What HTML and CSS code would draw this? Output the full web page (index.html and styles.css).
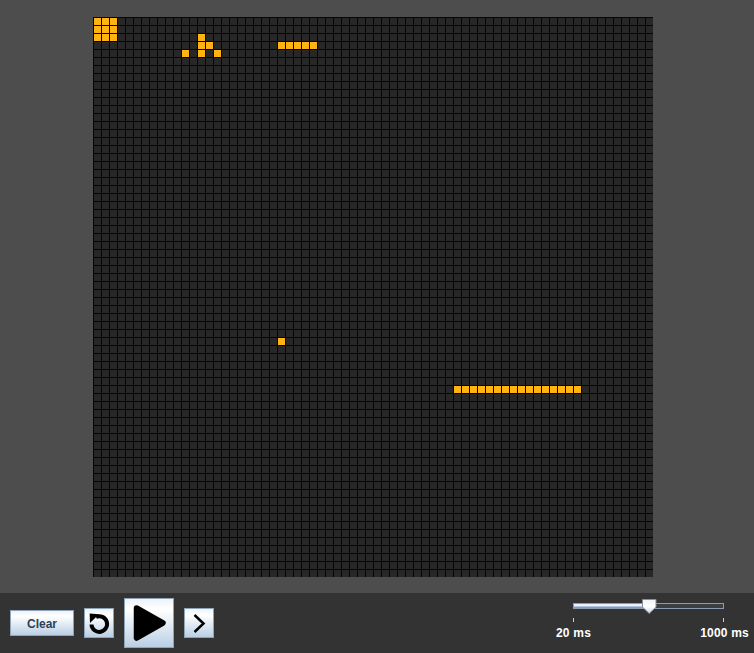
FILE: index.html
```html
<!DOCTYPE html>
<html lang="en">
<head>
<meta charset="utf-8">
<title>Game of Life</title>
<link rel="stylesheet" href="styles.css">
</head>
<body>
<main class="stage">
  <div class="board">
    <i class="cell" style="grid-area:1/1"></i><i class="cell" style="grid-area:1/2"></i><i class="cell" style="grid-area:1/3"></i>
    <i class="cell" style="grid-area:2/1"></i><i class="cell" style="grid-area:2/2"></i><i class="cell" style="grid-area:2/3"></i>
    <i class="cell" style="grid-area:3/1"></i><i class="cell" style="grid-area:3/2"></i><i class="cell" style="grid-area:3/3"></i>
    <i class="cell" style="grid-area:3/14"></i>
    <i class="cell" style="grid-area:4/14"></i><i class="cell" style="grid-area:4/15"></i>
    <i class="cell" style="grid-area:5/12"></i><i class="cell" style="grid-area:5/14"></i><i class="cell" style="grid-area:5/16"></i>
    <i class="cell" style="grid-area:4/24"></i><i class="cell" style="grid-area:4/25"></i><i class="cell" style="grid-area:4/26"></i><i class="cell" style="grid-area:4/27"></i><i class="cell" style="grid-area:4/28"></i>
    <i class="cell" style="grid-area:41/24"></i>
    <i class="cell" style="grid-area:47/46"></i><i class="cell" style="grid-area:47/47"></i><i class="cell" style="grid-area:47/48"></i><i class="cell" style="grid-area:47/49"></i>
    <i class="cell" style="grid-area:47/50"></i><i class="cell" style="grid-area:47/51"></i><i class="cell" style="grid-area:47/52"></i><i class="cell" style="grid-area:47/53"></i>
    <i class="cell" style="grid-area:47/54"></i><i class="cell" style="grid-area:47/55"></i><i class="cell" style="grid-area:47/56"></i><i class="cell" style="grid-area:47/57"></i>
    <i class="cell" style="grid-area:47/58"></i><i class="cell" style="grid-area:47/59"></i><i class="cell" style="grid-area:47/60"></i><i class="cell" style="grid-area:47/61"></i>
  </div>
</main>
<footer class="controls">
  <button class="btn btn-text" type="button">Clear</button>
  <button class="btn btn-icon" type="button" aria-label="Reset">
    <svg width="24" height="24" viewBox="0 0 24 24" class="glyph"><path d="M4.5 13.5 A7.8 7.8 0 1 0 9 6" fill="none" stroke="#000" stroke-width="4"/><path d="M2.6 2.6 L12 3.2 L3 12 Z" fill="#000"/></svg>
  </button>
  <button class="btn btn-play" type="button" aria-label="Play">
    <svg width="50" height="50" viewBox="0 0 50 50" class="glyph"><path d="M12.5 10 L39 25 L12.5 40 Z" fill="#000" stroke="#000" stroke-width="5.5" stroke-linejoin="round"/></svg>
  </button>
  <button class="btn btn-icon" type="button" aria-label="Step">
    <svg width="28" height="28" viewBox="0 0 28 28" class="glyph"><path d="M9.5 6 L18.5 14.5 L9.5 23" fill="none" stroke="#000" stroke-width="2.5"/></svg>
  </button>
  <div class="speed">
    <div class="track">
      <div class="track-fill"></div>
      <svg class="thumb" width="15" height="15" viewBox="0 0 15 15"><defs><linearGradient id="tg" x1="0" y1="0" x2="0" y2="1"><stop offset="0" stop-color="#eef4fb"/><stop offset="0.5" stop-color="#ffffff"/><stop offset="1" stop-color="#c8d6e6"/></linearGradient></defs><path d="M0.5 0.5 H14 V8 L7.2 14.5 L0.5 8 Z" fill="url(#tg)" stroke="#8a9099" stroke-width="1"/></svg>
    </div>
    <div class="ticks"><span class="tick"></span><span class="tick"></span></div>
    <div class="labels"><span>20 ms</span><span>1000 ms</span></div>
  </div>
</footer>
</body>
</html>
```
FILE: styles.css
```css
html, body {
  margin: 0;
  padding: 0;
}
body {
  width: 754px;
  height: 653px;
  overflow: hidden;
  display: flex;
  flex-direction: column;
  background: #4d4d4d;
  font-family: "Liberation Sans", Arial, sans-serif;
}
.stage {
  height: 593px;
  padding: 17px 0 0 93px;
  box-sizing: border-box;
}
.board {
  width: 560px;
  height: 560px;
  box-sizing: border-box;
  padding: 1px 0 0 1px;
  display: grid;
  grid-template-columns: repeat(70, 8px);
  grid-template-rows: repeat(70, 8px);
  overflow: hidden;
  background-color: #272727;
  background-image:
    repeating-linear-gradient(to right, #050505 0, #050505 1px, transparent 1px, transparent 8px),
    repeating-linear-gradient(to bottom, #050505 0, #050505 1px, transparent 1px, transparent 8px);
}
.cell {
  display: block;
  width: 7px;
  height: 7px;
  background: #ffb412;
}
.controls {
  height: 60px;
  display: flex;
  align-items: center;
  gap: 10px;
  padding-left: 10px;
  background: #333333;
}
.btn {
  padding: 0;
  margin: 0;
  box-sizing: border-box;
  display: flex;
  align-items: center;
  justify-content: center;
  border: 1px solid #8ea4b9;
  background: linear-gradient(to bottom, #edf3f9 0%, #ffffff 22%, #e6eef6 50%, #bacfe4 100%);
}
.btn-text {
  width: 64px;
  height: 26px;
  padding-top: 1px;
  font: bold 12px "Liberation Sans", Arial, sans-serif;
  color: #2b3f5a;
}
.btn-icon {
  width: 30px;
  height: 30px;
}
.btn-play {
  width: 50px;
  height: 50px;
}
.glyph {
  display: block;
  flex: none;
}
.speed {
  margin-left: auto;
  margin-right: 30px;
  width: 151px;
  align-self: flex-start;
  padding-top: 10px;
}
.track {
  position: relative;
  height: 6px;
  box-sizing: border-box;
  border: 1px solid #8c9bb0;
  background: #3a3f44;
}
.track-fill {
  width: 70px;
  height: 4px;
  background: linear-gradient(to bottom, #dfe8f5, #ffffff 30%, #a9c2e6 65%, #5f86c4);
}
.thumb {
  position: absolute;
  left: 68px;
  top: -5px;
}
.ticks {
  display: flex;
  justify-content: space-between;
  margin-top: 9px;
}
.tick {
  width: 1px;
  height: 4px;
  background: #c7d0da;
}
.labels {
  display: flex;
  justify-content: space-between;
  margin: 4px -25px 0 -17px;
  font-size: 12px;
  line-height: 14px;
  font-weight: bold;
  letter-spacing: 0.2px;
  color: #ffffff;
}
```
